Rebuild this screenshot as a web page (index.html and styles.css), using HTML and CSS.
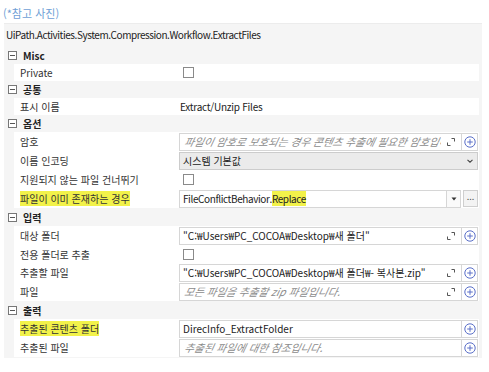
FILE: index.html
```html
<!DOCTYPE html>
<html lang="ko">
<head>
<meta charset="utf-8">
<link rel="stylesheet" href="styles.css">
</head>
<body>
<div class="caption">(*참고 사진)</div>
<div class="panel">
  <div class="title">UiPath.Activities.System.Compression.Workflow.ExtractFiles</div>

  <div class="group"><span class="toggle"></span>Misc</div>
  <div class="row r17"><div class="label">Private</div><div class="value"><span class="check"></span></div></div>

  <div class="group g17"><span class="toggle"></span>공통</div>
  <div class="row r17"><div class="label">표시 이름</div><div class="value"><span class="plain">Extract/Unzip Files</span></div></div>

  <div class="group g17"><span class="toggle"></span>옵션</div>
  <div class="row"><div class="label">암호</div><div class="value">
    <div class="field"><span class="input"><span class="ph">파일이 암호로 보호되는 경우 콘텐츠 추출에 필요한 암호입니다.</span></span><span class="expand"><svg width="8" height="8" viewBox="0 0 8 8"><path d="M0.5 4.5V7.5H3.5M4.5 0.5H7.5V3.5" fill="none" stroke="#555" stroke-width="1"/></svg></span><span class="add"><svg width="12" height="12" viewBox="0 0 12 12"><circle cx="6" cy="6" r="5.2" fill="none" stroke="#5a6fc8"/><path d="M6 3.2V8.8M3.2 6H8.8" stroke="#5a6fc8"/></svg></span></div>
  </div></div>
  <div class="row"><div class="label">이름 인코딩</div><div class="value">
    <div class="field select"><span class="input">시스템 기본값</span><span class="chev"><svg width="8" height="6" viewBox="0 0 8 6"><path d="M1.5 1.8L4 4.2L6.5 1.8" fill="none" stroke="#444" stroke-width="1.1"/></svg></span></div>
  </div></div>
  <div class="row"><div class="label">지원되지 않는 파일 건너뛰기</div><div class="value"><span class="check"></span></div></div>
  <div class="row"><div class="label"><span class="hl">파일이 이미 존재하는 경우</span></div><div class="value">
    <div class="combo">
      <div class="field grow"><span class="input narrow">FileConflictBehavior.<span class="hl">Replace</span></span></div>
      <span class="drop"><svg width="6" height="4" viewBox="0 0 6 4"><path d="M0.5 0.5H5.5L3 3.5Z" fill="#333"/></svg></span>
      <span class="dots">...</span>
    </div>
  </div></div>

  <div class="group"><span class="toggle"></span>입력</div>
  <div class="row"><div class="label">대상 폴더</div><div class="value">
    <div class="field"><span class="input">"C:₩Users₩PC_COCOA₩Desktop₩새 폴더"</span><span class="expand"><svg width="8" height="8" viewBox="0 0 8 8"><path d="M0.5 4.5V7.5H3.5M4.5 0.5H7.5V3.5" fill="none" stroke="#555" stroke-width="1"/></svg></span><span class="add"><svg width="12" height="12" viewBox="0 0 12 12"><circle cx="6" cy="6" r="5.2" fill="none" stroke="#5a6fc8"/><path d="M6 3.2V8.8M3.2 6H8.8" stroke="#5a6fc8"/></svg></span></div>
  </div></div>
  <div class="row r18"><div class="label">전용 폴더로 추출</div><div class="value"><span class="check"></span></div></div>
  <div class="row"><div class="label">추출할 파일</div><div class="value">
    <div class="field"><span class="input">"C:₩Users₩PC_COCOA₩Desktop₩새 폴더₩- 복사본.zip"</span><span class="expand"><svg width="8" height="8" viewBox="0 0 8 8"><path d="M0.5 4.5V7.5H3.5M4.5 0.5H7.5V3.5" fill="none" stroke="#555" stroke-width="1"/></svg></span><span class="add"><svg width="12" height="12" viewBox="0 0 12 12"><circle cx="6" cy="6" r="5.2" fill="none" stroke="#5a6fc8"/><path d="M6 3.2V8.8M3.2 6H8.8" stroke="#5a6fc8"/></svg></span></div>
  </div></div>
  <div class="row"><div class="label">파일</div><div class="value">
    <div class="field"><span class="input"><span class="ph">모든 파일을 추출할 zip 파일입니다.</span></span><span class="expand"><svg width="8" height="8" viewBox="0 0 8 8"><path d="M0.5 4.5V7.5H3.5M4.5 0.5H7.5V3.5" fill="none" stroke="#555" stroke-width="1"/></svg></span><span class="add"><svg width="12" height="12" viewBox="0 0 12 12"><circle cx="6" cy="6" r="5.2" fill="none" stroke="#5a6fc8"/><path d="M6 3.2V8.8M3.2 6H8.8" stroke="#5a6fc8"/></svg></span></div>
  </div></div>

  <div class="group"><span class="toggle"></span>출력</div>
  <div class="row"><div class="label"><span class="hl">추출된 콘텐츠 폴더</span></div><div class="value">
    <div class="field"><span class="input">DirecInfo_ExtractFolder</span><span class="add"><svg width="12" height="12" viewBox="0 0 12 12"><circle cx="6" cy="6" r="5.2" fill="none" stroke="#5a6fc8"/><path d="M6 3.2V8.8M3.2 6H8.8" stroke="#5a6fc8"/></svg></span></div>
  </div></div>
  <div class="row"><div class="label">추출된 파일</div><div class="value">
    <div class="field"><span class="input"><span class="ph">추출된 파일에 대한 참조입니다.</span></span><span class="add"><svg width="12" height="12" viewBox="0 0 12 12"><circle cx="6" cy="6" r="5.2" fill="none" stroke="#5a6fc8"/><path d="M6 3.2V8.8M3.2 6H8.8" stroke="#5a6fc8"/></svg></span></div>
  </div></div>
</div>
</body>
</html>
```
FILE: styles.css
```css
* { box-sizing: border-box; }
html, body { margin: 0; padding: 0; background: #fff; }
body {
  width: 489px;
  height: 372px;
  overflow: hidden;
  font-family: "Noto Sans CJK KR", "Noto Sans", sans-serif;
  font-size: 10px;
  color: #222;
}
.caption {
  height: 23px;
  padding-left: 3px;
  line-height: 26px;
  font-size: 11px;
  color: #6f9fd6;
}
.panel {
  margin-left: 4px;
  width: 478px;
  background: #f5f5f5;
  border-top: 1px solid #ececec;
  padding-right: 3px;
  padding-bottom: 1px;
}
.title {
  height: 22px;
  padding-left: 2px;
  line-height: 22px;
  white-space: nowrap;
  letter-spacing: -0.45px;
}
.group {
  height: 18px;
  display: flex;
  align-items: center;
  font-weight: bold;
  padding-left: 4px;
}
.group.g17 { height: 17px; }
.toggle {
  width: 9px;
  height: 9px;
  border: 1px solid #777;
  margin-right: 6px;
  position: relative;
  background: #fff;
}
.toggle::after {
  content: "";
  position: absolute;
  left: 1px;
  right: 1px;
  top: 3px;
  height: 1px;
  background: #555;
}
.row {
  height: 19px;
  margin-left: 10px;
  background: #fff;
  display: flex;
  align-items: center;
}
.row.r17 { height: 17px; }
.row.r18 { height: 18px; }
.label {
  width: 165px;
  padding-left: 6px;
  white-space: nowrap;
  color: #333;
}
.hl { background: #f2f24a; }
.value {
  width: 300px;
  padding-right: 1px;
  display: flex;
  align-items: center;
}
.plain { padding-left: 1px; letter-spacing: -0.25px; }
.check {
  margin-left: 4px;
  width: 11px;
  height: 11px;
  border: 1px solid #8a8a8a;
  background: #fff;
}
.field {
  flex: 1;
  height: 18px;
  border: 1px solid #d6d6d6;
  background: #fff;
  display: flex;
  align-items: center;
  overflow: hidden;
}
.input {
  flex: 1;
  padding-left: 3px;
  white-space: nowrap;
  overflow: hidden;
  color: #222;
}
.narrow { letter-spacing: -0.4px; }
.ph {
  display: inline-block;
  color: #8c8c8c;
  font-size: 10.6px;
  font-style: italic;
  transform: skewX(-12deg);
  transform-origin: left bottom;
}
.expand {
  width: 8px;
  height: 8px;
  margin: 0 6px 0 6px;
  display: flex;
}
.add {
  width: 16px;
  height: 100%;
  border-left: 1px solid #d6d6d6;
  display: flex;
  align-items: center;
  justify-content: center;
}
.select {
  background: #ebebeb;
  border-color: #cccccc;
}
.chev {
  width: 14px;
  display: flex;
  justify-content: center;
}
.combo {
  flex: 1;
  display: flex;
  align-items: center;
}
.grow { flex: 1; }
.drop {
  width: 14px;
  height: 18px;
  border: 1px solid #d6d6d6;
  border-left: none;
  background: #fafafa;
  display: flex;
  align-items: center;
  justify-content: center;
}
.dots {
  margin-left: 2px;
  width: 15px;
  height: 17px;
  border: 1px solid #cfcfcf;
  background: #f3f3f3;
  color: #555;
  font-size: 9px;
  line-height: 12px;
  text-align: center;
}
```
